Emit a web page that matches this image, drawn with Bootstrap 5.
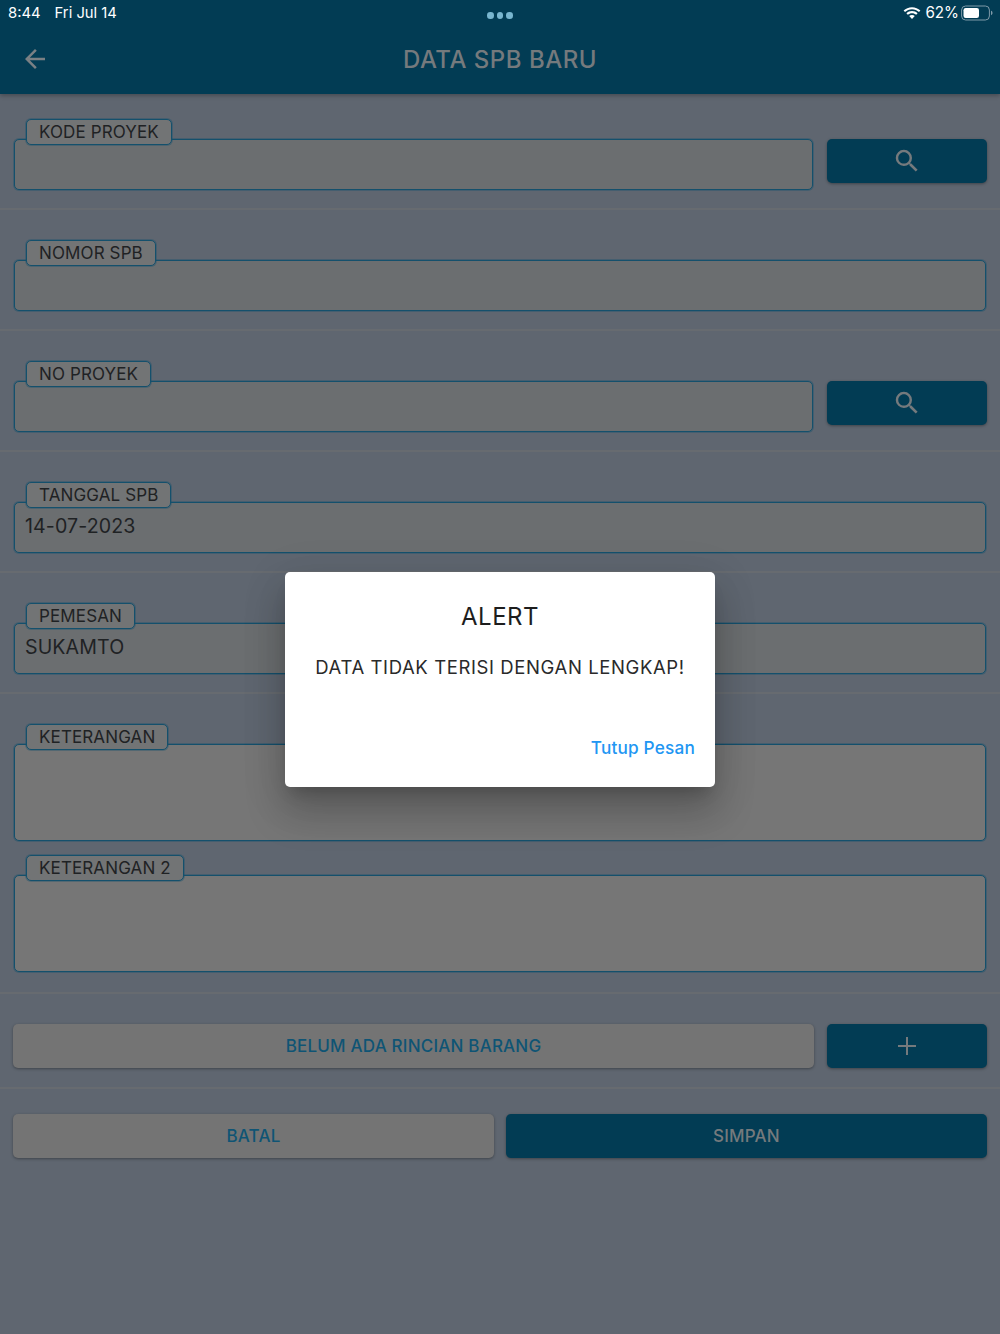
<!DOCTYPE html>
<html lang="id">
<head>
<meta charset="utf-8">
<title>Data SPB Baru</title>
<link href="https://cdn.jsdelivr.net/npm/bootstrap@5.3.0/dist/css/bootstrap.min.css" rel="stylesheet">
<style>
html,body{height:100%}
body{background:#5f6670;font-family:Inter,"Liberation Sans",sans-serif;color:#1c1c1c;width:1000px;height:1334px;overflow:hidden;position:relative}
.app-head{background:#023c54;height:94px;box-shadow:0 2px 4px rgba(0,0,0,.25);color:#fff}
.stat-bar{height:24px;padding:1px 7px 0 8px;font-size:14.8px;line-height:24px;position:relative}
.clock-date{margin-left:14px}
.dots{gap:3px;padding-top:12px;position:absolute;left:487px;top:0}
.dots i{display:block;width:6.5px;height:6.5px;border-radius:50%;background:#79b6cf}
.batt{font-size:15.2px;gap:4px}
.batt-txt{margin-right:-2px}
.title-bar{height:70px;padding-left:20px;position:relative}
.title-txt{position:absolute;left:0;right:0;top:21px;text-align:center;font-size:24px;line-height:30px;font-weight:500;color:#757a7d;letter-spacing:.5px}
.sect{padding:0 13px}
.gap-wide{gap:13px}
.gap-mid{gap:12px}
.sect-a{padding-top:24px;padding-bottom:17px}
.sect-b{padding-top:29px;padding-bottom:17px}
.sect-k1{padding-top:29px}
.sect-k2{padding-top:12px;padding-bottom:19px}
.sect-list{padding-top:30px;padding-bottom:19px}
.sect-foot{padding-top:25px}
.sep{height:2px;background:#676b70}
.fld-tag{position:relative;z-index:1;display:block;width:fit-content;margin:1px 0 -7px 13px;height:26px;line-height:24px;padding:0 12px;border:1px solid #14506c;box-shadow:0 0 0 1px rgba(20,80,108,.35);border-radius:5px;background:#727475;color:#1f2224;font-size:17px;letter-spacing:.12px}
.fld-box{margin:1px;height:51px;background:#6b6e70;border:1px solid #14506c;box-shadow:0 0 0 1px rgba(20,80,108,.35);border-radius:5px;padding:0 10px;font-size:19.6px;line-height:47px;letter-spacing:.1px;color:#1f2224}
.fld-tall{height:97px;background:#767676}
.act{width:160px;height:44px;flex:none;border:0;border-radius:5px;background:#023c54;box-shadow:0 1px 3px rgba(0,0,0,.35);padding:0}
.act-s{margin-top:21px}
.soft{background:#747474;color:#0f5474;height:44px;border:0;border-radius:5px;box-shadow:0 1px 3px rgba(0,0,0,.35);font-size:17px;font-weight:500;letter-spacing:.2px;padding:2px 0 0}
.solid-btn{background:#023c54;color:#757a7d}
.alert-box{position:absolute;left:285px;top:572px;width:430px;height:215px;border-radius:5px;background:#fff;box-shadow:0 24px 38px 3px rgba(0,0,0,.2),0 9px 46px 8px rgba(0,0,0,.06),0 11px 15px -7px rgba(0,0,0,.2)}
.alert-ttl{font-size:24px;line-height:30px;letter-spacing:.5px;color:#1d1d1d;margin-top:30px}
.alert-msg{font-size:18.5px;line-height:24px;letter-spacing:.6px;color:#2a2a2a;margin-top:23px}
.alert-btn{position:absolute;right:20px;bottom:27px;font-size:17.2px;line-height:24px;font-weight:500;color:#2196f3;letter-spacing:.2px}
</style>
</head>
<body>
<header class="app-head">
  <div class="stat-bar d-flex justify-content-between">
    <div><span>8:44</span><span class="clock-date">Fri Jul 14</span></div>
    <div class="dots d-flex"><i></i><i></i><i></i></div>
    <div class="d-flex align-items-center batt">
      <svg width="18" height="14" viewBox="0 0 18 14"><path fill="#fff" d="M9 1.200c3.300 0 6.200 1.300 8.400 3.400L16 6.100C14.200 4.400 11.700 3.300 9 3.300S3.800 4.400 2 6.100L.6 4.600C2.800 2.500 5.700 1.200 9 1.200zM9 5.100c2.200 0 4.100.9 5.600 2.200l-1.400 1.500C12.100 7.800 10.600 7.200 9 7.200s-3.100.6-4.200 1.600L3.400 7.300C4.900 6 6.800 5.100 9 5.100zM9 9c1.100 0 2.100.4 2.800 1.100L9 13l-2.800-2.900C6.900 9.400 7.900 9 9 9z"/></svg>
      <span class="batt-txt">62%</span>
      <svg width="32" height="16" viewBox="0 0 32 16"><rect x=".6" y="1" width="27.800" height="14" rx="4" fill="none" stroke="#7f9aa8"/><rect x="2.500" y="3" width="15.500" height="10" rx="2.200" fill="#fff"/><path d="M30 5.800c1 .3 1.500 1.200 1.500 2.200s-.5 1.900-1.500 2.200z" fill="#7f9aa8"/></svg>
    </div>
  </div>
  <div class="title-bar d-flex align-items-center">
    <svg width="30" height="30" viewBox="0 0 24 24"><path fill="#7a8084" d="M20 11H7.830l5.590-5.590L12 4l-8 8 8 8 1.410-1.410L7.830 13H20v-2z"/></svg>
    <div class="title-txt">DATA SPB BARU</div>
  </div>
</header>

<main>
  <section class="sect sect-a d-flex gap-wide align-items-start">
    <div class="flex-grow-1">
      <div class="fld-tag">KODE PROYEK</div>
      <div class="fld-box"></div>
    </div>
    <button class="act act-s d-flex align-items-center justify-content-center" type="button" aria-label="Cari">
      <svg width="30" height="30" viewBox="0 0 24 24"><path fill="#757a7d" d="M15.500 14h-.79l-.28-.27A6.471 6.471 0 0 0 16 9.500 6.500 6.500 0 1 0 9.500 16c1.610 0 3.090-.59 4.230-1.570l.27.28v.79l5 4.990L20.490 19l-4.990-5zm-6 0C7.010 14 5 11.990 5 9.500S7.010 5 9.500 5 14 7.010 14 9.500 11.990 14 9.500 14z"/></svg>
    </button>
  </section>
  <div class="sep"></div>
  <section class="sect sect-b">
    <div class="fld-tag">NOMOR SPB</div>
    <div class="fld-box"></div>
  </section>
  <div class="sep"></div>
  <section class="sect sect-b d-flex gap-wide align-items-start">
    <div class="flex-grow-1">
      <div class="fld-tag">NO PROYEK</div>
      <div class="fld-box"></div>
    </div>
    <button class="act act-s d-flex align-items-center justify-content-center" type="button" aria-label="Cari">
      <svg width="30" height="30" viewBox="0 0 24 24"><path fill="#757a7d" d="M15.500 14h-.79l-.28-.27A6.471 6.471 0 0 0 16 9.500 6.500 6.500 0 1 0 9.500 16c1.610 0 3.090-.59 4.230-1.570l.27.28v.79l5 4.990L20.490 19l-4.990-5zm-6 0C7.010 14 5 11.990 5 9.500S7.010 5 9.500 5 14 7.010 14 9.500 11.990 14 9.500 14z"/></svg>
    </button>
  </section>
  <div class="sep"></div>
  <section class="sect sect-b">
    <div class="fld-tag">TANGGAL SPB</div>
    <div class="fld-box">14-07-2023</div>
  </section>
  <div class="sep"></div>
  <section class="sect sect-b">
    <div class="fld-tag">PEMESAN</div>
    <div class="fld-box">SUKAMTO</div>
  </section>
  <div class="sep"></div>
  <section class="sect sect-k1">
    <div class="fld-tag">KETERANGAN</div>
    <div class="fld-box fld-tall"></div>
  </section>
  <section class="sect sect-k2">
    <div class="fld-tag">KETERANGAN 2</div>
    <div class="fld-box fld-tall"></div>
  </section>
  <div class="sep"></div>
  <section class="sect sect-list d-flex gap-wide">
    <button class="soft flex-grow-1" type="button">BELUM ADA RINCIAN BARANG</button>
    <button class="act d-flex align-items-center justify-content-center" type="button" aria-label="Tambah">
      <svg width="20" height="20" viewBox="0 0 20 20"><path d="M10 1v18M1 10h18" stroke="#757a7d" stroke-width="2" fill="none"/></svg>
    </button>
  </section>
  <div class="sep"></div>
  <section class="sect sect-foot d-flex gap-mid">
    <button class="soft flex-fill w-50" type="button">BATAL</button>
    <button class="soft solid-btn flex-fill w-50" type="button">SIMPAN</button>
  </section>
</main>

<div class="alert-box text-center" role="dialog">
  <div class="alert-ttl">ALERT</div>
  <div class="alert-msg">DATA TIDAK TERISI DENGAN LENGKAP!</div>
  <div class="alert-btn">Tutup Pesan</div>
</div>
<script src="https://cdn.jsdelivr.net/npm/bootstrap@5.3.0/dist/js/bootstrap.bundle.min.js"></script>
</body>
</html>
